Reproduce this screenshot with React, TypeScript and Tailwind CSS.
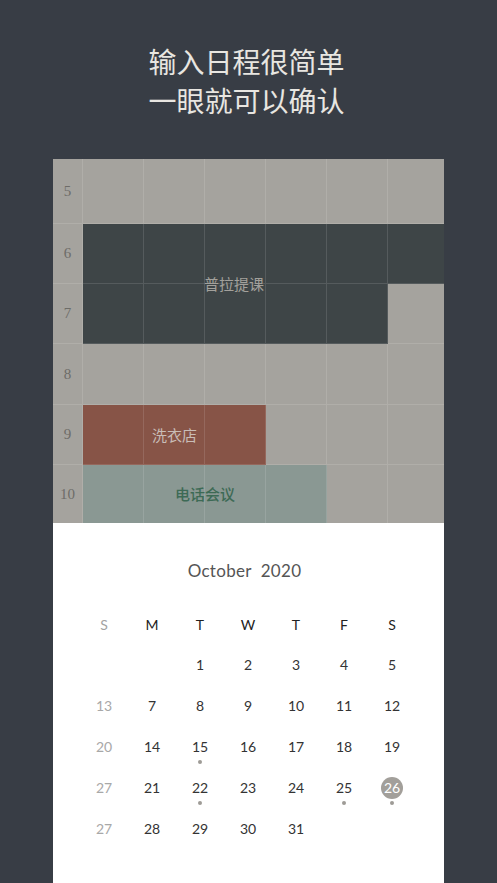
const colStart = ['col-start-1', 'col-start-2', 'col-start-3', 'col-start-4', 'col-start-5', 'col-start-6', 'col-start-7'];
const rowStart = ['row-start-1', 'row-start-2', 'row-start-3', 'row-start-4', 'row-start-5', 'row-start-6'];

const hours = [5, 6, 7, 8, 9, 10];

const weekdays = ['S', 'M', 'T', 'W', 'T', 'F', 'S'];

// null = empty cell
const weeks: (number | null)[][] = [
  [null, null, 1, 2, 3, 4, 5],
  [13, 7, 8, 9, 10, 11, 12],
  [20, 14, 15, 16, 17, 18, 19],
  [27, 21, 22, 23, 24, 25, 26],
  [27, 28, 29, 30, 31, null, null],
];

const dotted = new Set([15, 22, 25, 26]);
const selected = 26;

const ScheduleGrid = () => {
  const cells = [];
  for (let r = 0; r < 6; r++) {
    for (let c = 0; c < 7; c++) {
      const borders = [
        c < 6 ? 'border-r' : '',
        r < 5 ? 'border-b' : '',
      ].join(' ');
      cells.push(
        <div
          key={`${r}-${c}`}
          className={`${rowStart[r]} ${colStart[c]} ${borders} border-white/[0.12] flex items-center justify-center`}
        >
          {c === 0 && (
            <span className="text-[15px] text-[#6d6c68]" style={{ fontFamily: '"Liberation Serif", serif' }}>
              {hours[r]}
            </span>
          )}
        </div>
      );
    }
  }

  return (
    <div className="grid grid-cols-[30px_61px_61px_61px_61px_61px_1fr] grid-rows-[65px_60px_60px_61px_60px_58px] bg-[#a5a39e]">
      {/* event blocks */}
      <div className="row-start-2 row-span-2 col-start-2 col-span-5 bg-[#3e4547]" />
      <div className="row-start-2 col-start-7 bg-[#3e4547]" />
      <div className="row-start-5 col-start-2 col-span-3 bg-[#875447]" />
      <div className="row-start-6 col-start-2 col-span-4 bg-[#8a9893]" />

      {cells}

      {/* labels */}
      <div className="row-start-2 row-span-2 col-start-2 col-span-5 flex items-center justify-center pr-[3px] text-[15px] text-[#a3a19c]">
        普拉提课
      </div>
      <div className="row-start-5 col-start-2 col-span-3 flex items-center justify-center text-[15px] text-[#c9bdb7]">
        洗衣店
      </div>
      <div className="row-start-6 col-start-2 col-span-4 flex items-center justify-center text-[15px] font-medium text-[#3d6a55]">
        电话会议
      </div>
    </div>
  );
};

const MonthCalendar = () => {
  return (
    <div className="bg-white h-[360px] pt-[36px]" style={{ fontFamily: 'Lato, "Noto Sans", sans-serif' }}>
      <div className="text-center text-[17px] leading-[24px] text-[#555555] whitespace-pre tracking-[0.3px] pr-[8px]">
        {'October  2020'}
      </div>
      <div className="mt-[32px] ml-[27px] w-[336px] grid grid-cols-7">
        {weekdays.map((d, i) => (
          <div
            key={i}
            className={`h-[40px] text-center text-[14px] leading-[20px] ${i === 0 ? 'text-[#a3a3a3]' : 'text-[#222222]'}`}
          >
            {d}
          </div>
        ))}
        {weeks.flatMap((week, wi) =>
          week.map((day, di) => (
            <div key={`${wi}-${di}`} className="h-[41px] flex justify-center">
              {day !== null && (
                <div className="relative w-[24px] h-[20px] flex items-center justify-center">
                  {day === selected && (
                    <span className="absolute left-1/2 top-1/2 -translate-x-1/2 -translate-y-1/2 w-[22px] h-[22px] rounded-full bg-[#a29f9a]" />
                  )}
                  <span
                    className={`relative text-[14px] leading-[20px] ${
                      day === selected ? 'text-white' : di === 0 ? 'text-[#a8a8a8]' : 'text-[#333333]'
                    }`}
                  >
                    {day}
                  </span>
                  {dotted.has(day) && (
                    <span className="absolute left-1/2 -translate-x-1/2 top-[23px] w-[4px] h-[4px] rounded-full bg-[#9e9b96]" />
                  )}
                </div>
              )}
            </div>
          ))
        )}
      </div>
    </div>
  );
};

export default function App() {
  return (
    <div
      className="w-full h-[883px] overflow-hidden bg-[#383d45]"
      style={{ fontFamily: '"Noto Sans CJK SC", "Noto Sans", sans-serif' }}
    >
      <div className="pt-[42px] pr-[4px] text-center text-[28px] leading-[39px] text-[#e8e6e1]">
        <div>输入日程很简单</div>
        <div>一眼就可以确认</div>
      </div>
      <div className="mt-[39px] mx-auto w-[391px]">
        <ScheduleGrid />
        <MonthCalendar />
      </div>
    </div>
  );
}
